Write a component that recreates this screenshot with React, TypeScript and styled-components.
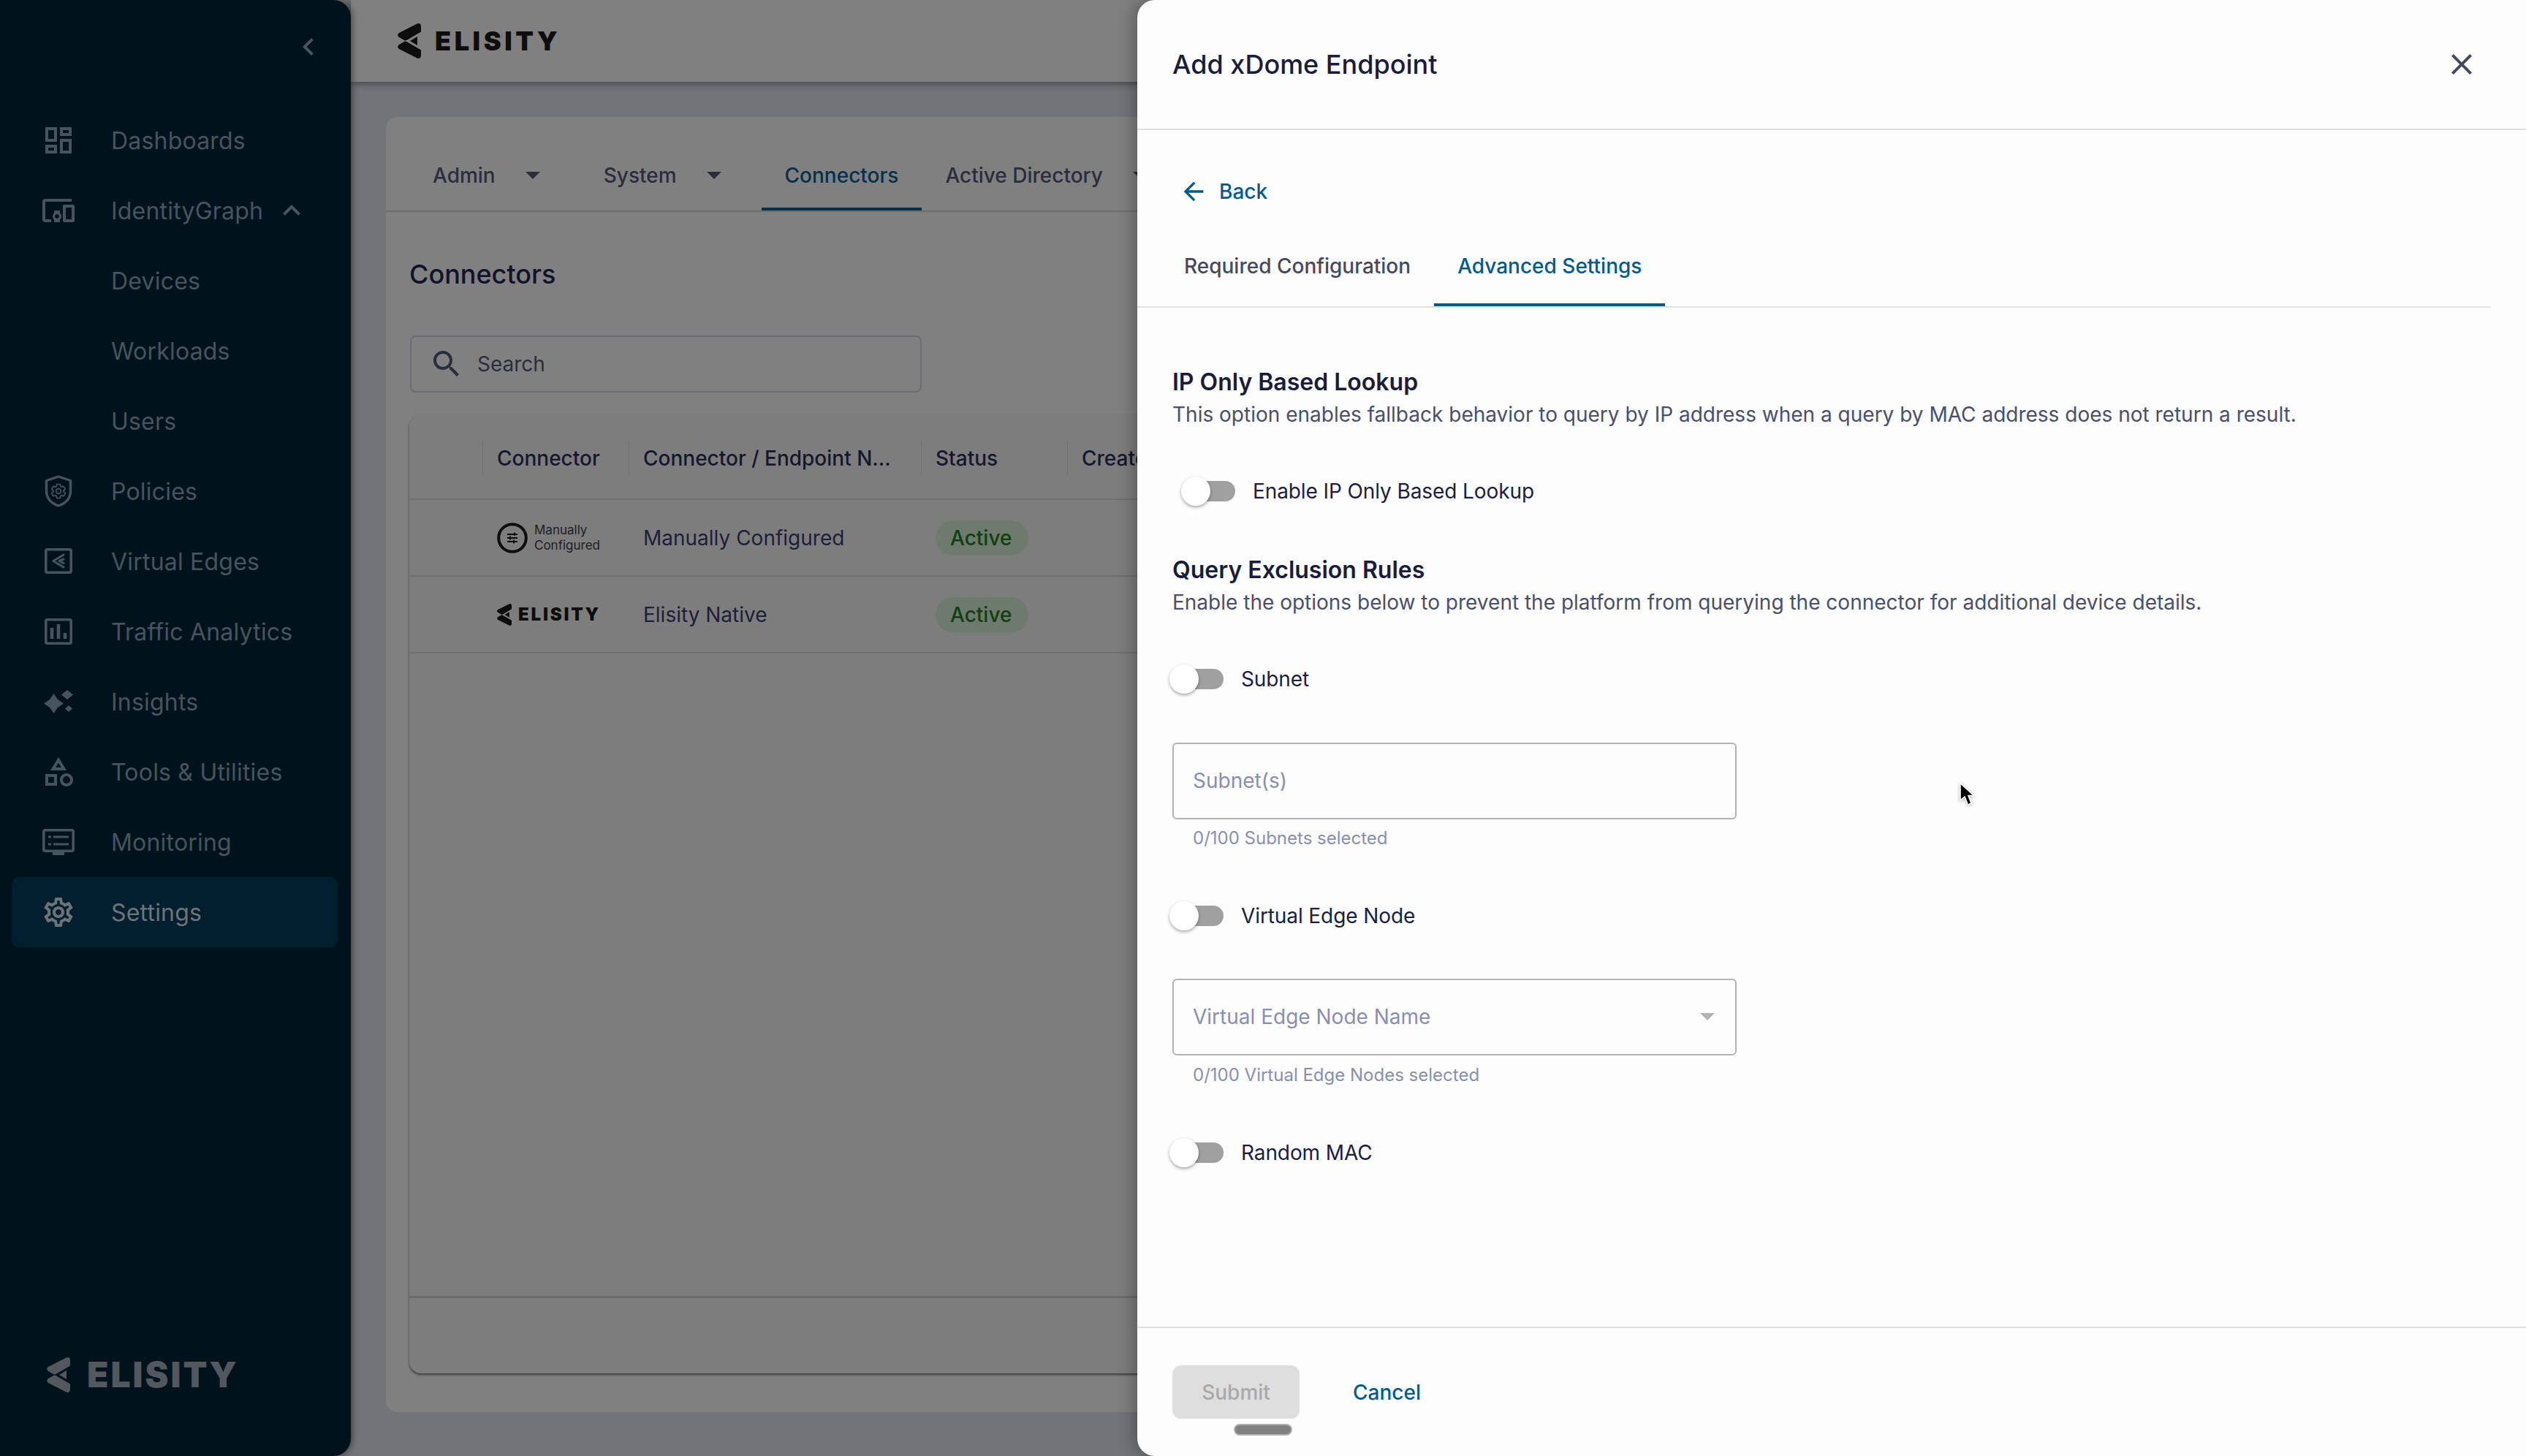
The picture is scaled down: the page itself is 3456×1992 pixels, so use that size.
import React from 'react';
import styled, { createGlobalStyle } from 'styled-components';
import {
  MdArrowBack,
  MdChevronLeft,
  MdClose,
  MdExpandLess,
  MdOutlineCategory,
  MdOutlineDashboard,
  MdOutlineDevicesOther,
  MdOutlineSettings,
  MdSearch
} from 'react-icons/md';

const GlobalStyle = createGlobalStyle`
  html, body {
    margin: 0;
    padding: 0;
    width: 3456px;
    height: 1992px;
    overflow: hidden;
    background: #737478;
    font-family: Inter, "Liberation Sans", sans-serif;
  }
  * {
    box-sizing: border-box;
  }
`;

const Page = styled.div`
  position: relative;
  display: grid;
  grid-template-columns: 480px 1fr;
  width: 3456px;
  height: 1992px;
  overflow: hidden;
`;

/* ---------- sidebar ---------- */

const Sidebar = styled.aside`
  position: relative;
  z-index: 2;
  display: flex;
  flex-direction: column;
  height: 1992px;
  background: #00131d;
  border-radius: 0 24px 24px 0;
  box-shadow: 2px 0 8px rgba(0, 0, 0, 0.45);
`;

const CollapseRow = styled.div`
  display: flex;
  justify-content: flex-end;
  height: 144px;
  padding: 40px 34px 0 0;
  color: #46545f;
`;

const Nav = styled.nav`
  display: flex;
  flex-direction: column;
  flex: 1;
`;

const NavItem = styled.div<{ $active?: boolean }>`
  display: flex;
  align-items: center;
  gap: 48px;
  height: 96px;
  margin: 0 18px 0 16px;
  padding-left: 40px;
  border-radius: 10px;
  font-size: 32px;
  letter-spacing: 0.2px;
  color: ${(p) => (p.$active ? '#6d7479' : '#46545f')};
  background: ${(p) => (p.$active ? '#021f30' : 'transparent')};
`;

const NavIcon = styled.span`
  display: flex;
  align-items: center;
  justify-content: center;
  width: 48px;
  height: 48px;
  flex: none;
`;

const NavSubItem = styled(NavItem)`
  padding-left: 136px;
`;

const NavCaret = styled.span`
  display: flex;
  margin-left: -33px;
`;

const SidebarLogo = styled.div`
  display: flex;
  align-items: center;
  gap: 23px;
  height: 48px;
  margin: 0 0 87px 64px;
  color: #52585d;
`;

const LogoText = styled.span<{ $size: number; $spacing: number }>`
  font-size: ${(p) => p.$size}px;
  font-weight: 900;
  line-height: 1;
  letter-spacing: ${(p) => p.$spacing}px;
`;

/* ---------- page behind the drawer ---------- */

const Main = styled.main`
  display: flex;
  flex-direction: column;
  min-width: 0;
`;

const TopBar = styled.header`
  display: flex;
  align-items: center;
  gap: 19px;
  height: 112px;
  flex: none;
  padding: 0 0 0 64px;
  background: #808080;
  box-shadow: 0 2px 10px rgba(0, 0, 0, 0.45);
  color: #0d0d0d;
`;

const Card = styled.section`
  display: flex;
  flex-direction: column;
  height: 1772px;
  margin: 48px 48px 0 48px;
  padding: 32px 32px 0;
  background: #808080;
  border-radius: 16px;
`;

const PageTabs = styled.div`
  display: flex;
  flex: none;
  height: 98px;
  margin: 0 -32px;
  padding-left: 32px;
  border-bottom: 2px solid #6e6e6e;
`;

const PageTab = styled.div<{ $active?: boolean; $caret?: boolean }>`
  display: flex;
  align-items: center;
  height: 96px;
  padding: 4px ${(p) => (p.$caret ? 55 : 32)}px 0 32px;
  font-size: 28px;
  font-weight: 500;
  color: ${(p) => (p.$active ? '#03304a' : '#2b2d3c')};
  border-bottom: 4px solid ${(p) => (p.$active ? '#03304a' : 'transparent')};
`;

const Caret = styled.span`
  width: 0;
  height: 0;
  margin-left: 41px;
  border-left: 10px solid transparent;
  border-right: 10px solid transparent;
  border-top: 10px solid #2b2d3c;
`;

const CardTitle = styled.h2`
  margin: 63px 0 0;
  font-size: 36px;
  font-weight: 500;
  line-height: 44px;
  color: #10132a;
`;

const SearchBox = styled.div`
  display: flex;
  align-items: center;
  gap: 18px;
  width: 700px;
  height: 78px;
  flex: none;
  margin: 62px 0 1px 1px;
  padding-left: 24px;
  border: 2px solid #6c6d74;
  border-radius: 8px;
  font-size: 28px;
  color: #2b2d3c;
`;

const Table = styled.div`
  display: flex;
  flex-direction: column;
  height: 1312px;
  flex: none;
  margin-top: 29px;
  background: #7d7d7d;
  border-radius: 16px;
  box-shadow: 0 2px 3px rgba(0, 0, 0, 0.55);
`;

const HeadRow = styled.div`
  display: grid;
  grid-template-columns: 100px 200px 400px 200px 1fr;
  align-items: center;
  height: 117px;
  flex: none;
  padding-top: 4px;
  border-bottom: 2px solid #6e6e6e;
`;

const HeadCell = styled.div<{ $empty?: boolean }>`
  display: flex;
  align-items: center;
  height: 48px;
  padding-left: 19px;
  border-left: ${(p) => (p.$empty ? 'none' : '1px solid #6e6e6e')};
  font-size: 28px;
  font-weight: 500;
  color: #14172e;
  white-space: nowrap;
`;

const BodyRow = styled.div`
  display: grid;
  grid-template-columns: 100px 200px 400px 200px 1fr;
  align-items: center;
  height: 105px;
  flex: none;
  border-bottom: 2px solid #6e6e6e;
`;

const BodyCell = styled.div`
  padding-left: 20px;
  font-size: 28px;
  color: #1d2038;
  white-space: nowrap;
`;

const StatusPill = styled.span`
  display: inline-flex;
  align-items: center;
  height: 48px;
  padding: 0 23px 0 20px;
  border-radius: 24px;
  background: #6e7a6e;
  color: #103f10;
  font-weight: 500;
`;

const ConnectorLogo = styled.div`
  display: flex;
  align-items: center;
  gap: 9px;
  color: #0d0d0d;
`;

const ConnectorLabel = styled.span`
  font-size: 17px;
  line-height: 21px;
  color: #1d1d22;
  white-space: pre-line;
`;

const TableSpacer = styled.div`
  flex: 1;
`;

const TableFooter = styled.div`
  height: 106px;
  flex: none;
  border-top: 3px solid #6c6c6c;
`;

/* ---------- drawer ---------- */

const Drawer = styled.aside`
  position: absolute;
  top: 0;
  right: 0;
  bottom: 0;
  z-index: 3;
  display: flex;
  flex-direction: column;
  width: 1900px;
  background: #fdfdfd;
  border-radius: 24px 0 0 24px;
  box-shadow: -6px 0 22px rgba(0, 0, 0, 0.28);
`;

const DrawerHead = styled.div`
  display: flex;
  align-items: center;
  justify-content: space-between;
  height: 178px;
  flex: none;
  padding: 0 64px 0 48px;
  border-bottom: 2px solid #e0e0e0;
  color: #45495f;
`;

const DrawerTitle = styled.h1`
  margin: 0;
  font-size: 36px;
  font-weight: 500;
  color: #191c3a;
`;

const DrawerBody = styled.div`
  display: flex;
  flex-direction: column;
  flex: 1;
  padding: 56px 48px 0;
`;

const BackLink = styled.div`
  display: flex;
  align-items: center;
  gap: 15px;
  height: 56px;
  margin-left: 9px;
  font-size: 28px;
  font-weight: 500;
  color: #005a8c;
`;

const FormTabs = styled.div`
  display: flex;
  height: 112px;
  flex: none;
  margin: 19px 0 0 -48px;
  padding-left: 32px;
  border-bottom: 2px solid #e0e0e0;
`;

const FormTab = styled.div<{ $active?: boolean }>`
  display: flex;
  align-items: center;
  height: 110px;
  padding: 4px 32px 0;
  font-size: 28px;
  font-weight: 500;
  color: ${(p) => (p.$active ? '#005a8c' : '#45495f')};
  border-bottom: 4px solid ${(p) => (p.$active ? '#005a8c' : 'transparent')};
`;

const SectionTitle = styled.h3<{ $top: number }>`
  margin: ${(p) => p.$top}px 0 0;
  font-size: 32px;
  font-weight: 600;
  line-height: 44px;
  color: #191c3a;
`;

const SectionText = styled.p`
  margin: 0;
  font-size: 28px;
  line-height: 44px;
  color: #4a4f6a;
`;

const ToggleRow = styled.div<{ $top: number; $indent?: boolean }>`
  display: flex;
  align-items: center;
  gap: 24px;
  height: 56px;
  margin: ${(p) => p.$top}px 0 0 ${(p) => (p.$indent ? 18 : 2)}px;
  font-size: 28px;
  letter-spacing: -0.1px;
  color: #1c2040;
`;

const Track = styled.span`
  position: relative;
  width: 68px;
  height: 28px;
  flex: none;
  background: #a0a0a0;
  border-radius: 14px;
`;

const Knob = styled.span`
  position: absolute;
  top: -6px;
  left: -6px;
  width: 40px;
  height: 40px;
  background: #fff;
  border-radius: 50%;
  box-shadow: 0 2px 4px rgba(0, 0, 0, 0.35);
`;

const Field = styled.div<{ $top: number }>`
  display: flex;
  align-items: center;
  justify-content: space-between;
  width: 772px;
  height: 105px;
  flex: none;
  margin-top: ${(p) => p.$top}px;
  padding: 0 28px 2px 26px;
  border: 2px solid #b3b3b3;
  border-radius: 6px;
  font-size: 28px;
  color: #8a8fb0;
`;

const FieldArrow = styled.span`
  width: 0;
  height: 0;
  border-left: 10px solid transparent;
  border-right: 10px solid transparent;
  border-top: 10px solid #b3b3b3;
`;

const Helper = styled.div<{ $top: number }>`
  margin: ${(p) => p.$top}px 0 0 28px;
  font-size: 24px;
  line-height: 32px;
  color: #8a8fb0;
`;

const DrawerFoot = styled.div`
  display: flex;
  align-items: flex-start;
  height: 177px;
  flex: none;
  padding: 51px 0 0 48px;
  border-top: 2px solid #e0e0e0;
`;

const SubmitButton = styled.div`
  display: flex;
  align-items: center;
  justify-content: center;
  width: 174px;
  height: 73px;
  background: #dedede;
  border-radius: 12px;
  font-size: 28px;
  font-weight: 500;
  color: #a9a9a9;
`;

const CancelButton = styled.div`
  display: flex;
  align-items: center;
  height: 73px;
  margin-left: 73px;
  font-size: 28px;
  font-weight: 500;
  color: #005a8c;
`;

const ScrollPill = styled.div`
  position: absolute;
  left: 132px;
  top: 1948px;
  width: 80px;
  height: 16px;
  background: #808080;
  border: 2px solid #b0b0b0;
  border-radius: 8px;
`;

const Pointer = styled.svg`
  position: absolute;
  left: 2678px;
  top: 1068px;
  z-index: 4;
  filter: drop-shadow(0 1px 2px rgba(0, 0, 0, 0.3));
`;

/* ---------- drawings ---------- */

const GEAR =
  'M19.43 12.98c.04-.32.07-.64.07-.98s-.03-.66-.07-.98l2.11-1.65c.19-.15.24-.42.12-.64l-2-3.46c-.12-.22-.39-.3-.61-.22l-2.49 1c-.52-.4-1.08-.73-1.69-.98l-.38-2.65C14.46 2.18 14.25 2 14 2h-4c-.25 0-.46.18-.49.42l-.38 2.65c-.61.25-1.17.59-1.69.98l-2.49-1c-.23-.09-.49 0-.61.22l-2 3.46c-.13.22-.07.49.12.64l2.11 1.65c-.04.32-.07.65-.07.98s.03.66.07.98l-2.11 1.65c-.19.15-.24.42-.12.64l2 3.46c.12.22.39.3.61.22l2.49-1c.52.4 1.08.73 1.69.98l.38 2.65c.03.24.24.42.49.42h4c.25 0 .46-.18.49-.42l.38-2.65c.61-.25 1.17-.59 1.69-.98l2.49 1c.23.09.49 0 .61-.22l2-3.46c.12-.22.07-.49-.12-.64l-2.11-1.65zM12 15.5c-1.93 0-3.5-1.57-3.5-3.5s1.57-3.5 3.5-3.5 3.5 1.57 3.5 3.5-1.57 3.5-3.5 3.5z';

function ShieldIcon(): React.ReactElement {
  return (
    <svg width="48" height="48" viewBox="0 0 48 48" fill="none" stroke="currentColor">
      <path d="M24 4 40.5 9.5V24C40.5 34 33.5 41 24 44 14.5 41 7.5 34 7.5 24V9.5Z" strokeWidth="3.4" strokeLinejoin="round" />
      <g transform="translate(12.6 12.6) scale(.95)">
        <path d={GEAR} strokeWidth="1.8" fill="none" />
      </g>
    </svg>
  );
}

function EdgeIcon(): React.ReactElement {
  return (
    <svg width="48" height="48" viewBox="0 0 48 48" fill="none" stroke="currentColor">
      <rect x="6.8" y="7.8" width="34.4" height="31.4" rx="2" strokeWidth="3.6" />
      <path d="M31 15 17 23.5 31 32M31 21 25 23.5 31 26.5" strokeWidth="3" strokeLinejoin="round" strokeLinecap="round" />
    </svg>
  );
}

function BarsIcon(): React.ReactElement {
  return (
    <svg width="48" height="48" viewBox="0 0 48 48" fill="none" stroke="currentColor">
      <rect x="6.8" y="7.8" width="34.4" height="32.4" rx="2" strokeWidth="3.6" />
      <path d="M15 34V19M24 34V14M33 34V26" strokeWidth="4.6" />
    </svg>
  );
}

function SparkIcon(): React.ReactElement {
  return (
    <svg width="48" height="48" viewBox="0 0 48 48" fill="currentColor">
      <path d="M17.5 13 23 21 31 26.5 23 32 17.5 40 12 32 4 26.5 12 21Z" />
      <path d="M36 8 44 14.5 36 21 28 14.5Z" />
      <path d="M38 29 43 33.5 38 38 33 33.5Z" />
    </svg>
  );
}

function MonitorIcon(): React.ReactElement {
  return (
    <svg width="48" height="48" viewBox="0 0 48 48" fill="none" stroke="currentColor">
      <rect x="3.8" y="7.8" width="40.4" height="28.4" rx="2" strokeWidth="3.6" />
      <path d="M16 40H32" strokeWidth="4" />
      <path d="M10 17H14M17 17H38M10 27H14M17 27H38" strokeWidth="3.2" />
    </svg>
  );
}

function LogoMark({ height }: { height: number }): React.ReactElement {
  return (
    <svg width={(height * 32) / 48} height={height} viewBox="0 0 32 48" fill="currentColor">
      <path d="M26 .8C29.5-1 32 .8 32 4V11.5L12.5 23 10 23.5 3 19.5C-.8 17.3-.8 14.6 3 12.5Z" />
      <path d="M26 47.2C29.5 49 32 47.2 32 44V36.5L12.5 25 10 24.5 3 28.5C-.8 30.7-.8 33.4 3 35.5Z" />
      <path d="M27 18V30L17 24Z" />
    </svg>
  );
}

function ManualIcon(): React.ReactElement {
  return (
    <svg width="42" height="42" viewBox="0 0 42 42" fill="none" stroke="currentColor">
      <circle cx="21" cy="21" r="18.8" strokeWidth="4" />
      <path d="M14 16H28M14 21H28M14 26H28M24 13.5V18M18 18.5V23.5M23 23.5V28.5" strokeWidth="1.8" />
    </svg>
  );
}

const navTop = [
  { label: 'Policies', icon: <ShieldIcon /> },
  { label: 'Virtual Edges', icon: <EdgeIcon /> },
  { label: 'Traffic Analytics', icon: <BarsIcon /> },
  { label: 'Insights', icon: <SparkIcon /> },
  { label: 'Tools & Utilities', icon: <MdOutlineCategory size={48} /> },
  { label: 'Monitoring', icon: <MonitorIcon /> }
];

function Toggle({ label, top, indent }: { label: string; top: number; indent?: boolean }): React.ReactElement {
  return (
    <ToggleRow $top={top} $indent={indent}>
      <Track>
        <Knob />
      </Track>
      {label}
    </ToggleRow>
  );
}

export default function App(): React.ReactElement {
  return (
    <Page>
      <GlobalStyle />
      <Sidebar>
        <CollapseRow>
          <MdChevronLeft size={48} />
        </CollapseRow>
        <Nav>
          <NavItem>
            <NavIcon>
              <MdOutlineDashboard size={48} />
            </NavIcon>
            Dashboards
          </NavItem>
          <NavItem>
            <NavIcon>
              <MdOutlineDevicesOther size={48} />
            </NavIcon>
            IdentityGraph
            <NavCaret>
              <MdExpandLess size={48} />
            </NavCaret>
          </NavItem>
          <NavSubItem>Devices</NavSubItem>
          <NavSubItem>Workloads</NavSubItem>
          <NavSubItem>Users</NavSubItem>
          {navTop.map((n) => (
            <NavItem key={n.label}>
              <NavIcon>{n.icon}</NavIcon>
              {n.label}
            </NavItem>
          ))}
          <NavItem $active>
            <NavIcon>
              <MdOutlineSettings size={48} />
            </NavIcon>
            Settings
          </NavItem>
        </Nav>
        <SidebarLogo>
          <LogoMark height={48} />
          <LogoText $size={48} $spacing={3}>ELISITY</LogoText>
        </SidebarLogo>
      </Sidebar>

      <Main>
        <TopBar>
          <LogoMark height={48} />
          <LogoText $size={36} $spacing={4.6}>ELISITY</LogoText>
        </TopBar>
        <Card>
          <PageTabs>
            <PageTab $caret>Admin<Caret /></PageTab>
            <PageTab $caret>System<Caret /></PageTab>
            <PageTab $active>Connectors</PageTab>
            <PageTab $caret>Active Directory<Caret /></PageTab>
          </PageTabs>
          <CardTitle>Connectors</CardTitle>
          <SearchBox>
            <MdSearch size={48} />
            Search
          </SearchBox>
          <Table>
            <HeadRow>
              <HeadCell $empty />
              <HeadCell>Connector</HeadCell>
              <HeadCell>Connector / Endpoint N...</HeadCell>
              <HeadCell>Status</HeadCell>
              <HeadCell>Created</HeadCell>
            </HeadRow>
            <BodyRow>
              <span />
              <BodyCell>
                <ConnectorLogo>
                  <ManualIcon />
                  <ConnectorLabel>{'Manually\nConfigured'}</ConnectorLabel>
                </ConnectorLogo>
              </BodyCell>
              <BodyCell>Manually Configured</BodyCell>
              <BodyCell><StatusPill>Active</StatusPill></BodyCell>
            </BodyRow>
            <BodyRow>
              <span />
              <BodyCell>
                <ConnectorLogo>
                  <LogoMark height={30} />
                  <LogoText $size={24} $spacing={2.8}>ELISITY</LogoText>
                </ConnectorLogo>
              </BodyCell>
              <BodyCell>Elisity Native</BodyCell>
              <BodyCell><StatusPill>Active</StatusPill></BodyCell>
            </BodyRow>
            <TableSpacer />
            <TableFooter />
          </Table>
        </Card>
      </Main>

      <Drawer>
        <DrawerHead>
          <DrawerTitle>Add xDome Endpoint</DrawerTitle>
          <MdClose size={48} />
        </DrawerHead>
        <DrawerBody>
          <BackLink>
            <MdArrowBack size={40} />
            Back
          </BackLink>
          <FormTabs>
            <FormTab>Required Configuration</FormTab>
            <FormTab $active>Advanced Settings</FormTab>
          </FormTabs>
          <SectionTitle $top={80}>IP Only Based Lookup</SectionTitle>
          <SectionText>
            This option enables fallback behavior to query by IP address when a query by MAC address does not return a result.
          </SectionText>
          <Toggle label="Enable IP Only Based Lookup" top={55} indent />
          <SectionTitle $top={58}>Query Exclusion Rules</SectionTitle>
          <SectionText>
            Enable the options below to prevent the platform from querying the connector for additional device details.
          </SectionText>
          <Toggle label="Subnet" top={55} />
          <Field $top={59}>Subnet(s)</Field>
          <Helper $top={10}>0/100 Subnets selected</Helper>
          <Toggle label="Virtual Edge Node" top={62} />
          <Field $top={58}>
            Virtual Edge Node Name
            <FieldArrow />
          </Field>
          <Helper $top={11}>0/100 Virtual Edge Nodes selected</Helper>
          <Toggle label="Random MAC" top={62} />
        </DrawerBody>
        <DrawerFoot>
          <SubmitButton>Submit</SubmitButton>
          <CancelButton>Cancel</CancelButton>
        </DrawerFoot>
        <ScrollPill />
      </Drawer>

      <Pointer width="28" height="38" viewBox="0 0 28 38">
        <path d="M4 3.5V27L10 22 14.5 33 19 31 15 20.5H22.5Z" fill="#000" stroke="#fff" strokeWidth="1.6" />
      </Pointer>
    </Page>
  );
}
